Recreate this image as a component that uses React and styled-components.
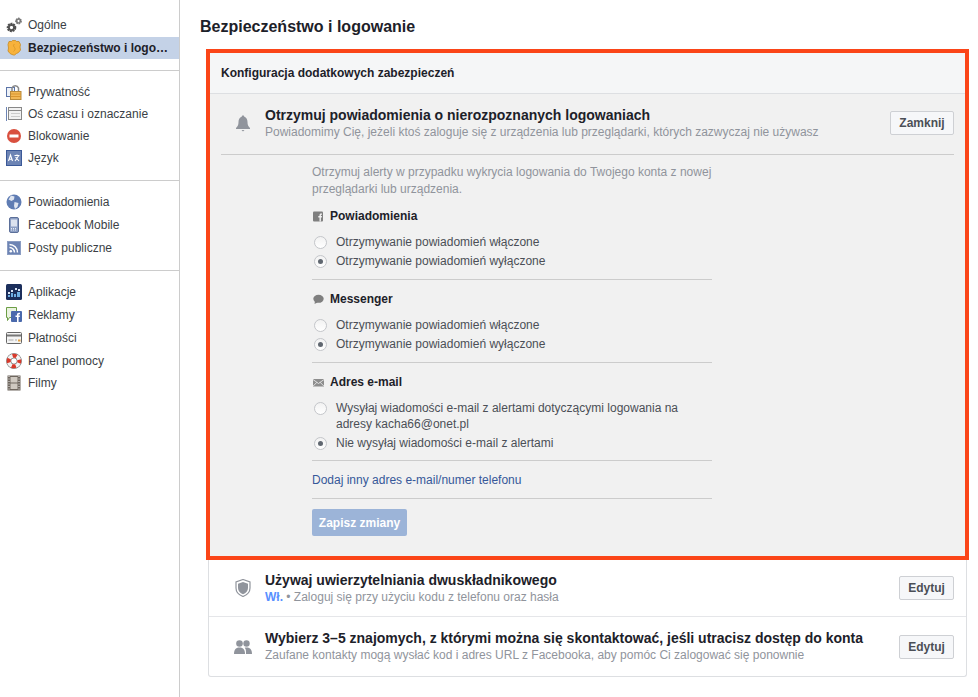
import styled, { createGlobalStyle } from 'styled-components';

const GlobalStyle = createGlobalStyle`
  html, body {
    margin: 0;
    padding: 0;
    background: #fff;
    font-family: "Liberation Sans", Arial, sans-serif;
    font-size: 12px;
    color: #1d2129;
  }
`;

const Page = styled.div`
  display: flex;
  width: 978px;
  height: 697px;
  overflow: hidden;
`;

const Sidebar = styled.nav`
  width: 179px;
  flex: none;
  border-right: 1px solid #ccc;
  padding-top: 13px;
`;

const NavGroup = styled.div`
  padding-bottom: 11px;
  margin-bottom: 9px;
  border-bottom: 1px solid #ccc;
  &:last-child { border-bottom: 0; }
`;

const NavItem = styled.div`
  display: flex;
  align-items: center;
  height: ${p => p.$h || 23}px;
  padding-left: 6px;
  gap: 6px;
  background: ${p => (p.$active ? '#c4d2e7' : 'transparent')};
  color: ${p => (p.$active ? '#1d2129' : '#3b3f46')};
  font-weight: ${p => (p.$active ? 'bold' : 'normal')};
  white-space: nowrap;
`;

const NavIcon = styled.svg`
  width: 16px;
  height: 16px;
  flex: none;
`;

const Main = styled.main`
  flex: 1;
  padding-left: 20px;
`;

const PageTitle = styled.h1`
  margin: 0;
  padding-top: 18px;
  font-size: 16px;
  line-height: 18px;
  font-weight: bold;
  color: #1d2129;
`;

const Highlight = styled.section`
  width: 755px;
  margin: 13px 0 0 6px;
  border: 4px solid #fb4518;
  background: #f1f1f1;
`;

const CardHead = styled.div`
  height: 41px;
  box-sizing: border-box;
  padding-left: 11px;
  display: flex;
  align-items: center;
  font-weight: bold;
  background: #f5f6f7;
  border-bottom: 1px solid #dddfe2;
  color: #1d2129;
`;

const OpenBody = styled.div`
  padding: 0 11px 20px 11px;
`;

const OpenRow = styled.div`
  display: flex;
  align-items: center;
  height: 61px;
  box-sizing: border-box;
  padding-bottom: 2px;
  border-bottom: 1px solid #ccc;
`;

const RowIconSlot = styled.div`
  width: 44px;
  flex: none;
  display: flex;
  justify-content: center;
`;

const RowText = styled.div`
  flex: 1;
`;

const RowTitle = styled.div`
  font-size: 14px;
  line-height: 17px;
  font-weight: bold;
  color: #1d2129;
`;

const RowSub = styled.div`
  font-size: 12px;
  line-height: 16px;
  color: #90949c;
`;

const On = styled.span`
  color: #5890ff;
  font-weight: bold;
`;

const Btn = styled.button`
  width: ${p => p.$w}px;
  height: 24px;
  padding: 0;
  box-sizing: border-box;
  font: bold 12px "Liberation Sans", Arial, sans-serif;
  color: #4b4f56;
  background: #f6f7f9;
  border: 1px solid #ced0d4;
  border-radius: 2px;
`;

const Form = styled.div`
  width: 400px;
  margin-left: 91px;
  padding-top: 9px;
`;

const Intro = styled.div`
  color: #90949c;
  line-height: 17px;
  width: 400px;
`;

const Block = styled.div`
  padding: ${p => p.$pad || '10px 0 9px'};
  border-bottom: 1px solid #ccc;
`;

const BlockHead = styled.div`
  display: flex;
  align-items: center;
  gap: 7px;
  height: 18px;
  font-weight: bold;
  color: #1d2129;
  margin-bottom: 7px;
`;

const HeadIcon = styled.svg`
  width: 11px;
  height: 11px;
  flex: none;
  margin-left: 1px;
  margin-right: -1px;
`;

const Option = styled.label`
  display: flex;
  align-items: flex-start;
  gap: 9px;
  padding: 2px 0 1px 2px;
  line-height: 16px;
  color: #4b4f56;
`;

const Radio = styled.span`
  width: 13px;
  height: 13px;
  flex: none;
  margin-top: 2px;
  box-sizing: border-box;
  border-radius: 50%;
  border: 1px solid #c4c6ca;
  background: linear-gradient(#f2f2f2, #fff);
  display: flex;
  align-items: center;
  justify-content: center;
  &::after {
    content: '';
    display: ${p => (p.$checked ? 'block' : 'none')};
    width: 5px;
    height: 5px;
    border-radius: 50%;
    background: #606770;
  }
`;

const FormLink = styled.div`
  color: #365899;
  line-height: 16px;
`;

const SaveBtn = styled.div`
  display: flex;
  align-items: center;
  justify-content: center;
  width: 95px;
  height: 27px;
  margin-top: 10px;
  border-radius: 2px;
  background: #9cb4d8;
  color: #fff;
  font-weight: bold;
`;

const Panel = styled.div`
  width: 759px;
  margin-left: 8px;
  box-sizing: border-box;
  border: 1px solid #dddfe2;
  border-top: 0;
  border-radius: 0 0 3px 3px;
`;

const PanelRow = styled.div`
  display: flex;
  align-items: center;
  height: ${p => p.$h}px;
  padding: 0 12px 0 12px;
  box-sizing: border-box;
  border-bottom: 1px solid #e5e6e9;
  &:last-child { border-bottom: 0; }
`;

const Gears = () => (
  <NavIcon viewBox="0 0 16 16">
    <circle cx="5.500" cy="10.500" r="3.200" fill="none" stroke="#4f4f4f" strokeWidth="3.200" strokeDasharray="1.700 0.600" />
    <circle cx="5.500" cy="10.500" r="2.700" fill="none" stroke="#4f4f4f" strokeWidth="1.600" />
    <circle cx="12.500" cy="4" r="2.200" fill="none" stroke="#777" strokeWidth="2.400" strokeDasharray="1.300 0.500" />
    <circle cx="12.500" cy="4" r="2" fill="none" stroke="#777" strokeWidth="1.200" />
  </NavIcon>
);

const Badge = () => (
  <NavIcon viewBox="0 0 16 16">
    <path d="M3 1.500h2.500l1-1h3l1 1H13l1.500 3-0.500 2.500 0.500 3-2 2.500-2 1-2 1.500h-1L6 14.500l-2-1-2-2.500 0.500-3L2 4.500z" fill="#f7b23c" stroke="#c98a1e" strokeWidth="0.800" />
    <path d="M8.500 4c-1.500 1-1 2.500 0 3.500s.5 3-1 4" fill="none" stroke="#dd9a28" strokeWidth="1" />
  </NavIcon>
);

const Lock = () => (
  <NavIcon viewBox="0 0 16 16">
    <rect x="0.500" y="3.500" width="8" height="9" fill="#eef2f8" stroke="#5b74a8" />
    <path d="M6 8V4a3.500 3.500 0 0 1 6.500 0v4" fill="none" stroke="#888" strokeWidth="1.500" />
    <rect x="4.500" y="7.500" width="10.500" height="8" fill="#f2b857" stroke="#b98a3a" />
    <path d="M5 10h10M5 12.500h10" stroke="#d9952f" />
  </NavIcon>
);

const Timeline = () => (
  <NavIcon viewBox="0 0 16 16">
    <path d="M0.500 1v14" stroke="#6d84b4" />
    <rect x="2.500" y="1.500" width="13" height="12" fill="#f2f2f2" stroke="#888" />
    <path d="M2.500 4.500h13" stroke="#888" />
    <path d="M5 7.500h9M5 10.500h9" stroke="#ccc" />
  </NavIcon>
);

const Stop = () => (
  <NavIcon viewBox="0 0 16 16">
    <circle cx="8" cy="8" r="7" fill="#d9503f" />
    <rect x="3.500" y="6.500" width="9" height="3" fill="#fff" />
  </NavIcon>
);

const Lang = () => (
  <NavIcon viewBox="0 0 16 16">
    <rect x="0.500" y="0.500" width="15" height="15" fill="#6d84b4" stroke="#3b5998" />
    <path d="M2.500 11l2-6 2 6M3.300 9.200h2.500M8.500 5.500h5M11 4.500v1.500M9 11l3.500-5M9.500 7l3.500 4" fill="none" stroke="#fff" strokeWidth="1.100" />
  </NavIcon>
);

const Globe = () => (
  <NavIcon viewBox="0 0 16 16">
    <circle cx="8" cy="8" r="7.500" fill="#5f7cb3" />
    <path d="M5 1.500l3.500 1-0.500 3-2.500 1.500-3-1.500zM8.500 8l4 1-1 4-2.500 2-1-3z" fill="#dfe5f0" />
  </NavIcon>
);

const Phone = () => (
  <NavIcon viewBox="0 0 16 16">
    <rect x="3.500" y="0.500" width="9" height="15" rx="1.500" fill="#8c9fc4" stroke="#5b6f99" />
    <rect x="5" y="2.500" width="6" height="7" fill="#dbe2ef" />
    <path d="M5 11.500h6M5 13h6" stroke="#e8ecf4" strokeDasharray="1 1" />
  </NavIcon>
);

const Rss = () => (
  <NavIcon viewBox="0 0 16 16">
    <rect x="1.500" y="1.500" width="13" height="13" fill="#6d84b4" stroke="#8b9dc3" />
    <circle cx="4.800" cy="11.200" r="1.300" fill="#fff" />
    <path d="M3.500 7.500a5 5 0 0 1 5 5M3.500 4.500a8 8 0 0 1 8 8" fill="none" stroke="#fff" strokeWidth="1.500" />
  </NavIcon>
);

const Apps = () => (
  <NavIcon viewBox="0 0 16 16">
    <rect width="16" height="16" rx="1.500" fill="#1c2f5c" />
    <path d="M2 13h2v-2H2zM5 13h2V9H5zM8 13h2v-3H8zM11 13h3V8h-3z" fill="#6fb0e6" />
    <path d="M5 6h2v2H5zM9 4h2v2H9zM12 5h2v2h-2zM2 8h2v2H2z" fill="#dbe6f5" />
  </NavIcon>
);

const Ads = () => (
  <NavIcon viewBox="0 0 16 16">
    <path d="M0.500 0.500h10v10H3.500l-2 3v-3h-1z" fill="#eaf3e0" stroke="#6c9e45" />
    <rect x="5" y="4" width="11" height="11" rx="1" fill="#4a69ac" />
    <path d="M11 15V10H9.500V8.500H11V7.500c0-1 .7-1.700 1.700-1.700H14v1.500h-1c-.3 0-.4.200-.4.500v.7H14L13.800 10h-1.200v5z" fill="#fff" />
  </NavIcon>
);

const CardIcon = () => (
  <NavIcon viewBox="0 0 16 16">
    <rect x="0.500" y="2.500" width="15" height="11" rx="1" fill="#f4f4f4" stroke="#666" />
    <rect x="1" y="4.500" width="14" height="2" fill="#777" />
    <path d="M2.500 10h5M9 10h2" stroke="#aaa" />
    <path d="M12 10.500h2.500" stroke="#e8a33d" strokeWidth="2" />
  </NavIcon>
);

const Buoy = () => (
  <NavIcon viewBox="0 0 16 16">
    <circle cx="8" cy="8" r="5.300" fill="none" stroke="#555" strokeWidth="5" />
    <circle cx="8" cy="8" r="5.300" fill="none" stroke="#f3f3f3" strokeWidth="4" />
    <circle cx="8" cy="8" r="5.300" fill="none" stroke="#d8392b" strokeWidth="4" strokeDasharray="4.160 4.160" strokeDashoffset="2.080" />
  </NavIcon>
);

const Film = () => (
  <NavIcon viewBox="0 0 16 16">
    <rect x="1.500" y="0.500" width="13" height="15" fill="#6e665e" />
    <rect x="4.500" y="2" width="7" height="5.500" fill="#cfc9c1" />
    <rect x="4.500" y="8.500" width="7" height="5.500" fill="#cfc9c1" />
    <path d="M3 1v14M13 1v14" stroke="#eee" strokeDasharray="1 1.500" />
  </NavIcon>
);

const navGroups = [
  [
    { label: 'Ogólne', Icon: Gears, h: 24 },
    { label: 'Bezpieczeństwo i logo…', Icon: Badge, active: true, h: 22 },
  ],
  [
    { label: 'Prywatność', Icon: Lock },
    { label: 'Oś czasu i oznaczanie', Icon: Timeline, h: 22 },
    { label: 'Blokowanie', Icon: Stop, h: 22 },
    { label: 'Język', Icon: Lang, h: 22 },
  ],
  [
    { label: 'Powiadomienia', Icon: Globe },
    { label: 'Facebook Mobile', Icon: Phone },
    { label: 'Posty publiczne', Icon: Rss },
  ],
  [
    { label: 'Aplikacje', Icon: Apps },
    { label: 'Reklamy', Icon: Ads },
    { label: 'Płatności', Icon: CardIcon },
    { label: 'Panel pomocy', Icon: Buoy },
    { label: 'Filmy', Icon: Film, h: 22 },
  ],
];

const Bell = () => (
  <svg width="16" height="17" viewBox="0 0 16 17">
    <path d="M8 0.500c.8 0 1.300.5 1.300 1.300C11.500 2.500 12.500 4.500 12.500 7c0 3 .8 4.300 2.500 6v1H1v-1c1.700-1.700 2.500-3 2.500-6 0-2.500 1-4.500 3.200-5.200C6.700 1 7.200.5 8 .5z" fill="#90949c" />
    <path d="M6.500 15h3L8 16.500z" fill="#90949c" />
  </svg>
);

const Shield = () => (
  <svg width="16" height="18" viewBox="0 0 16 18">
    <path d="M8 0.500l7 2.500v6c0 4-3 7-7 8.500C4 16 1 13 1 9V3z" fill="#fff" stroke="#90949c" strokeWidth="1.200" />
    <path d="M8 3l5 1.800V9c0 3-2 5-5 6.200C5 14 3 12 3 9V4.800z" fill="#90949c" />
  </svg>
);

const People = () => (
  <svg width="18" height="14" viewBox="0 0 18 14">
    <circle cx="5.500" cy="3.500" r="3.300" fill="#90949c" />
    <path d="M0 14c0-4 1.500-6.500 5.500-6.500S11 10 11 14z" fill="#90949c" />
    <circle cx="12.500" cy="3.500" r="3.200" fill="#90949c" />
    <path d="M12 14h6c0-4-1.500-6.500-5.500-6.500-.8 0-1.300.1-1.800.3 1.500 1.300 1.300 3.700 1.300 6.200z" fill="#90949c" />
  </svg>
);

const FbHead = () => (
  <HeadIcon viewBox="0 0 11 11">
    <rect width="10" height="10" y="0.500" rx="1" fill="#7f7f7f" />
    <path d="M6.500 10.500V6.500H5.300V5H6.500V4c0-1 .6-1.600 1.600-1.600h.9v1.400h-.7c-.3 0-.4.200-.4.500V5h1.100l-.2 1.500H7.900v4z" fill="#f1f1f1" />
  </HeadIcon>
);

const ChatHead = () => (
  <HeadIcon viewBox="0 0 11 11">
    <ellipse cx="5.500" cy="4.800" rx="5.200" ry="4" fill="#7f7f7f" />
    <path d="M2 7l-.5 3 3-1.500z" fill="#7f7f7f" />
  </HeadIcon>
);

const MailHead = () => (
  <HeadIcon viewBox="0 0 11 11">
    <rect y="2" width="11" height="7.500" fill="#8d8d8d" />
    <path d="M0 2.500l5.500 4 5.500-4M0 9.200l4-4M11 9.200l-4-4" fill="none" stroke="#f1f1f1" strokeWidth="0.800" />
  </HeadIcon>
);

const OptionRow = ({ checked, children }) => (
  <Option>
    <Radio $checked={checked} />
    <span>{children}</span>
  </Option>
);

function App() {
  return (
    <Page>
      <GlobalStyle />
      <Sidebar>
        {navGroups.map((group, i) => (
          <NavGroup key={i}>
            {group.map(({ label, Icon, active, h }) => (
              <NavItem key={label} $active={active} $h={h}>
                <Icon />
                <span>{label}</span>
              </NavItem>
            ))}
          </NavGroup>
        ))}
      </Sidebar>
      <Main>
        <PageTitle>Bezpieczeństwo i logowanie</PageTitle>
        <Highlight>
          <CardHead>Konfiguracja dodatkowych zabezpieczeń</CardHead>
          <OpenBody>
            <OpenRow>
              <RowIconSlot><Bell /></RowIconSlot>
              <RowText>
                <RowTitle>Otrzymuj powiadomienia o nierozpoznanych logowaniach</RowTitle>
                <RowSub>Powiadomimy Cię, jeżeli ktoś zaloguje się z urządzenia lub przeglądarki, których zazwyczaj nie używasz</RowSub>
              </RowText>
              <Btn $w={64}>Zamknij</Btn>
            </OpenRow>
            <Form>
              <Intro>Otrzymuj alerty w przypadku wykrycia logowania do Twojego konta z nowej przeglądarki lub urządzenia.</Intro>
              <Block $pad="9px 0 9px">
                <BlockHead><FbHead />Powiadomienia</BlockHead>
                <OptionRow>Otrzymywanie powiadomień włączone</OptionRow>
                <OptionRow checked>Otrzymywanie powiadomień wyłączone</OptionRow>
              </Block>
              <Block>
                <BlockHead><ChatHead />Messenger</BlockHead>
                <OptionRow>Otrzymywanie powiadomień włączone</OptionRow>
                <OptionRow checked>Otrzymywanie powiadomień wyłączone</OptionRow>
              </Block>
              <Block $pad="10px 0 8px">
                <BlockHead><MailHead />Adres e-mail</BlockHead>
                <OptionRow>Wysyłaj wiadomości e-mail z alertami dotyczącymi logowania na adresy kacha66@onet.pl</OptionRow>
                <OptionRow checked>Nie wysyłaj wiadomości e-mail z alertami</OptionRow>
              </Block>
              <Block $pad="11px 0 10px">
                <FormLink>Dodaj inny adres e-mail/numer telefonu</FormLink>
              </Block>
              <SaveBtn>Zapisz zmiany</SaveBtn>
            </Form>
          </OpenBody>
        </Highlight>
        <Panel>
          <PanelRow $h={57}>
            <RowIconSlot><Shield /></RowIconSlot>
            <RowText>
              <RowTitle>Używaj uwierzytelniania dwuskładnikowego</RowTitle>
              <RowSub><On>Wł.</On> • Zaloguj się przy użyciu kodu z telefonu oraz hasła</RowSub>
            </RowText>
            <Btn $w={55}>Edytuj</Btn>
          </PanelRow>
          <PanelRow $h={59}>
            <RowIconSlot><People /></RowIconSlot>
            <RowText>
              <RowTitle>Wybierz 3–5 znajomych, z którymi można się skontaktować, jeśli utracisz dostęp do konta</RowTitle>
              <RowSub>Zaufane kontakty mogą wysłać kod i adres URL z Facebooka, aby pomóc Ci zalogować się ponownie</RowSub>
            </RowText>
            <Btn $w={55}>Edytuj</Btn>
          </PanelRow>
        </Panel>
      </Main>
    </Page>
  );
}

export default App;
